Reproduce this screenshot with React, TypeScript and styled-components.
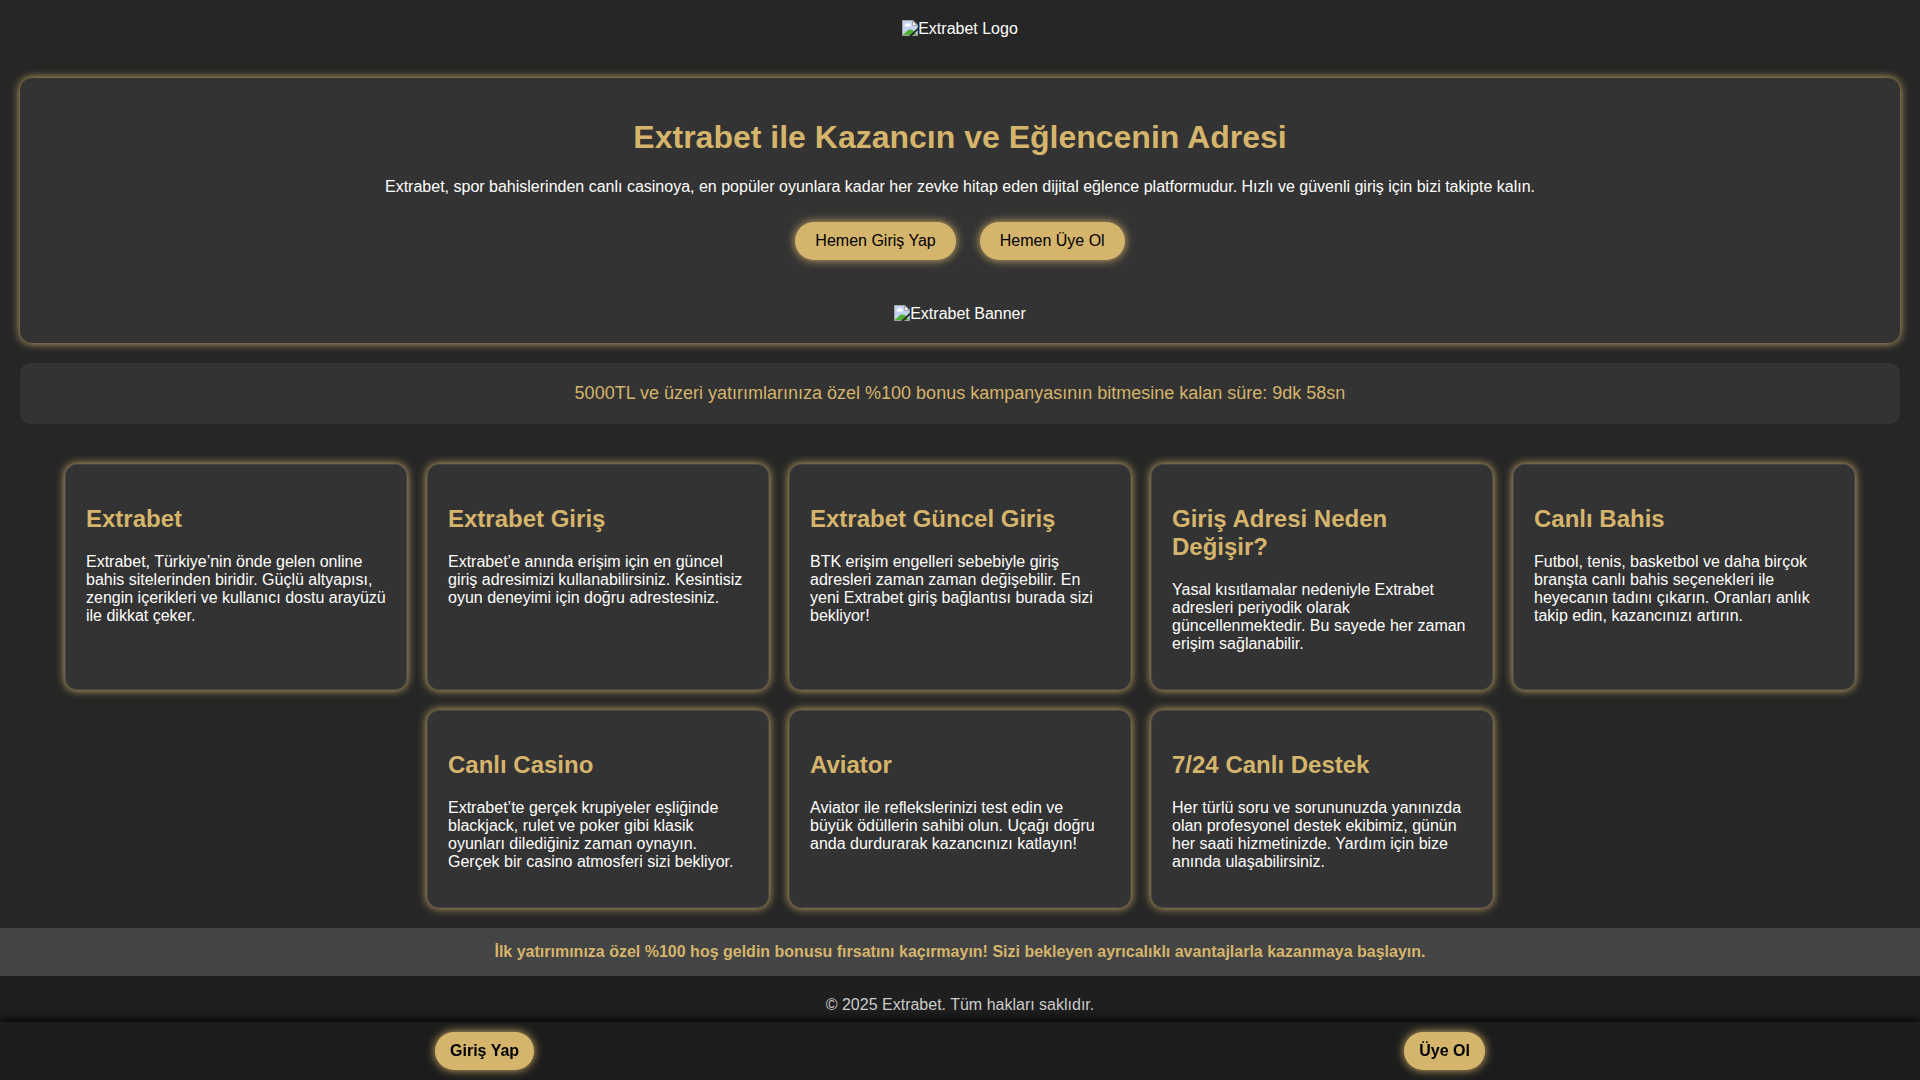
import React from "react";
import styled, { createGlobalStyle } from "styled-components";

const gold = "#d5b46b";

const Global = createGlobalStyle`
  body {
    margin: 0;
    background: #262626;
    color: #fff;
    font-family: "Liberation Sans", Arial, sans-serif;
    font-size: 16px;
    line-height: 18px;
  }
`;

const Header = styled.header`
  padding: 20px;
  text-align: center;
`;

const Picture = styled.span`
  display: flex;
  justify-content: center;
  align-items: flex-start;
`;

const Hero = styled.section`
  margin: 20px;
  padding: 20px;
  text-align: center;
  background: #333;
  border-radius: 12px;
  box-shadow: 0 0 10px ${gold};
`;

const Title = styled.h1`
  margin: 21px 0 22px;
  font-size: 32px;
  line-height: 37px;
  color: ${gold};
`;

const Lead = styled.p`
  margin: 16px 0 26px;
`;

const Actions = styled.div`
  display: flex;
  flex-wrap: wrap;
  justify-content: center;
  gap: 24px;
  margin-bottom: 45px;
`;

const Pill = styled.button<{ $strong?: boolean }>`
  padding: ${(p) => (p.$strong ? "10px 15px" : "10px 20px")};
  border: 0;
  border-radius: 25px;
  background: ${gold};
  color: #000;
  font: inherit;
  font-weight: ${(p) => (p.$strong ? 700 : 400)};
  box-shadow: 0 0 10px ${gold};
  cursor: pointer;
`;

const Countdown = styled.div`
  margin: 20px;
  padding: 20px;
  text-align: center;
  background: #333;
  border-radius: 10px;
  color: ${gold};
  font-size: 18px;
  line-height: 21px;
`;

const Cards = styled.main`
  display: flex;
  flex-wrap: wrap;
  justify-content: center;
  gap: 20px;
  padding: 20px;
`;

const Card = styled.article`
  width: 300px;
  padding: 20px;
  background: #333;
  border: 1px solid #444;
  border-radius: 12px;
  box-shadow: 0 0 10px ${gold};

  h2 {
    margin: 20px 0;
    font-size: 24px;
    line-height: 28px;
    color: ${gold};
  }

  p {
    margin: 16px 0;
  }
`;

const Notice = styled.div`
  padding: 15px;
  background: #444;
  color: ${gold};
  text-align: center;
  font-weight: 700;
`;

const Footer = styled.footer`
  padding: 20px;
  background: #1f1f1f;
  color: #ccc;
  text-align: center;
`;

const BottomBar = styled.nav`
  position: fixed;
  inset: auto 0 0;
  display: flex;
  justify-content: space-around;
  padding: 10px 0;
  background: #1c1c1c;
  box-shadow: 0 -2px 10px #000;
`;

const MissingPicture = ({ label }: { label: string }) => (
  <Picture>
    <svg width="16" height="16" viewBox="0 0 16 16" aria-hidden="true">
      <path d="M0.5 0.5H11L15.5 5V15.5H0.5Z" fill="#c3d4f5" />
      <path d="M3 6.5a1.5 1.5 0 0 1 1-2.4 2 2 0 0 1 3.5 0A1.5 1.5 0 0 1 8.5 6.5Z" fill="#fff" />
      <path d="M1 15V14.5C4 13 5 9.5 8 9.5S12 11 15 15Z" fill="#4fae33" />
      <path d="M0.5 15.5V0.5H11L15.5 5V15.5Z" fill="none" stroke="#a3a3a3" />
      <path d="M10.5 1V5.5H15Z" fill="#fff" stroke="#a3a3a3" />
      <path d="M7 16L16 7.5V10L10 16Z" fill="#2b2b2b" />
    </svg>
    {label}
  </Picture>
);

const cards = [
  ["Extrabet", "Extrabet, Türkiye’nin önde gelen online bahis sitelerinden biridir. Güçlü altyapısı, zengin içerikleri ve kullanıcı dostu arayüzü ile dikkat çeker."],
  ["Extrabet Giriş", "Extrabet’e anında erişim için en güncel giriş adresimizi kullanabilirsiniz. Kesintisiz oyun deneyimi için doğru adrestesiniz."],
  ["Extrabet Güncel Giriş", "BTK erişim engelleri sebebiyle giriş adresleri zaman zaman değişebilir. En yeni Extrabet giriş bağlantısı burada sizi bekliyor!"],
  ["Giriş Adresi Neden Değişir?", "Yasal kısıtlamalar nedeniyle Extrabet adresleri periyodik olarak güncellenmektedir. Bu sayede her zaman erişim sağlanabilir."],
  ["Canlı Bahis", "Futbol, tenis, basketbol ve daha birçok branşta canlı bahis seçenekleri ile heyecanın tadını çıkarın. Oranları anlık takip edin, kazancınızı artırın."],
  ["Canlı Casino", "Extrabet’te gerçek krupiyeler eşliğinde blackjack, rulet ve poker gibi klasik oyunları dilediğiniz zaman oynayın. Gerçek bir casino atmosferi sizi bekliyor."],
  ["Aviator", "Aviator ile reflekslerinizi test edin ve büyük ödüllerin sahibi olun. Uçağı doğru anda durdurarak kazancınızı katlayın!"],
  ["7/24 Canlı Destek", "Her türlü soru ve sorununuzda yanınızda olan profesyonel destek ekibimiz, günün her saati hizmetinizde. Yardım için bize anında ulaşabilirsiniz."],
];

export default function App() {
  return (
    <>
      <Global />
      <Header>
        <MissingPicture label="Extrabet Logo" />
      </Header>
      <Hero>
        <Title>Extrabet ile Kazancın ve Eğlencenin Adresi</Title>
        <Lead>
          Extrabet, spor bahislerinden canlı casinoya, en popüler oyunlara kadar her zevke hitap eden dijital eğlence platformudur. Hızlı ve güvenli giriş için bizi takipte kalın.
        </Lead>
        <Actions>
          <Pill>Hemen Giriş Yap</Pill>
          <Pill>Hemen Üye Ol</Pill>
        </Actions>
        <MissingPicture label="Extrabet Banner" />
      </Hero>
      <Countdown>5000TL ve üzeri yatırımlarınıza özel %100 bonus kampanyasının bitmesine kalan süre: 9dk 58sn</Countdown>
      <Cards>
        {cards.map(([title, text]) => (
          <Card key={title}>
            <h2>{title}</h2>
            <p>{text}</p>
          </Card>
        ))}
      </Cards>
      <Notice>İlk yatırımınıza özel %100 hoş geldin bonusu fırsatını kaçırmayın! Sizi bekleyen ayrıcalıklı avantajlarla kazanmaya başlayın.</Notice>
      <Footer>© 2025 Extrabet. Tüm hakları saklıdır.</Footer>
      <BottomBar>
        <Pill $strong>Giriş Yap</Pill>
        <Pill $strong>Üye Ol</Pill>
      </BottomBar>
    </>
  );
}
